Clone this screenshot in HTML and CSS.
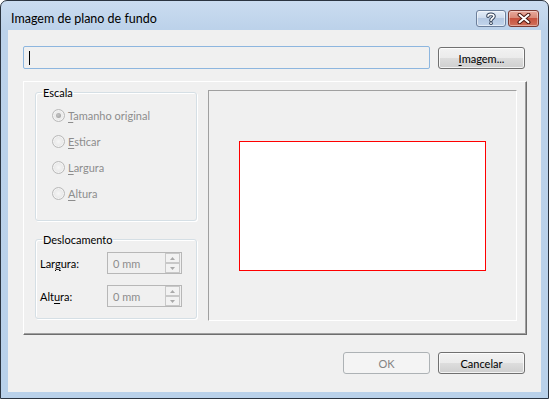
FILE: index.html
```html
<!DOCTYPE html>
<html lang="pt">
<head>
<meta charset="utf-8">
<title>Imagem de plano de fundo</title>
<link rel="stylesheet" href="styles.css">
</head>
<body>
<div class="window">
  <div class="titlebar">
    <span class="title">Imagem de plano de fundo</span>
    <div class="caption-btns">
      <div class="cap help">
        <svg width="12" height="13" viewBox="0 0 12 13">
          <path d="M3 4.2 C3 1.8 9 1.6 9 4.3 C9 6.2 6 6.3 6 8.4" fill="none" stroke="#34435a" stroke-width="3.6" stroke-linecap="round"/>
          <circle cx="6" cy="11.2" r="1.8" fill="#34435a"/>
          <path d="M3 4.2 C3 1.8 9 1.6 9 4.3 C9 6.2 6 6.3 6 8.4" fill="none" stroke="#fff" stroke-width="1.6" stroke-linecap="round"/>
          <circle cx="6" cy="11.2" r="0.9" fill="#fff"/>
        </svg>
      </div>
      <div class="cap close">
        <svg width="14" height="11" viewBox="0 0 14 11">
          <path d="M2.5 1.8 L11.5 9.2 M11.5 1.8 L2.5 9.2" stroke="#4a1710" stroke-width="4" stroke-linecap="round"/>
          <path d="M2.5 1.8 L11.5 9.2 M11.5 1.8 L2.5 9.2" stroke="#fff" stroke-width="2" stroke-linecap="round"/>
        </svg>
      </div>
    </div>
  </div>

  <div class="client">
    <div class="file-row">
      <div class="textbox"><span class="caret"></span></div>
      <div class="btn file-btn"><u>I</u>magem...</div>
    </div>

    <div class="panel">
      <div class="options">
        <fieldset class="group scale">
          <legend>Escala</legend>
          <div class="radio-row"><span class="radio checked"></span><span class="rlabel"><u>T</u>amanho original</span></div>
          <div class="radio-row"><span class="radio"></span><span class="rlabel"><u>E</u>sticar</span></div>
          <div class="radio-row"><span class="radio"></span><span class="rlabel"><u>L</u>argura</span></div>
          <div class="radio-row"><span class="radio"></span><span class="rlabel"><u>A</u>ltura</span></div>
        </fieldset>

        <fieldset class="group offset">
          <legend>Deslocamento</legend>
          <div class="spin-row">
            <span class="slabel">Lar<u>g</u>ura:</span>
            <div class="spinbox">
              <span class="svalue">0 mm</span>
              <div class="spin-btns">
                <span class="spin-btn"><svg width="5" height="3" viewBox="0 0 5 3"><path d="M0 3 L2.5 0 L5 3 Z" fill="#a9a9a9"/></svg></span>
                <span class="spin-btn"><svg width="5" height="3" viewBox="0 0 5 3"><path d="M0 0 L2.5 3 L5 0 Z" fill="#a9a9a9"/></svg></span>
              </div>
            </div>
          </div>
          <div class="spin-row">
            <span class="slabel">Alt<u>u</u>ra:</span>
            <div class="spinbox">
              <span class="svalue">0 mm</span>
              <div class="spin-btns">
                <span class="spin-btn"><svg width="5" height="3" viewBox="0 0 5 3"><path d="M0 3 L2.5 0 L5 3 Z" fill="#a9a9a9"/></svg></span>
                <span class="spin-btn"><svg width="5" height="3" viewBox="0 0 5 3"><path d="M0 0 L2.5 3 L5 0 Z" fill="#a9a9a9"/></svg></span>
              </div>
            </div>
          </div>
        </fieldset>
      </div>

      <div class="preview">
        <div class="page"></div>
      </div>
    </div>

    <div class="dialog-buttons">
      <div class="btn disabled">OK</div>
      <div class="btn">Cancelar</div>
    </div>
  </div>
</div>
</body>
</html>
```

FILE: styles.css
```css
* { box-sizing: border-box; }

html, body {
  margin: 0;
  padding: 0;
  background: #ffffff;
}

body {
  font-family: "Segoe UI", Lato, "Noto Sans", sans-serif;
  font-size: 12px;
  line-height: 15px;
  color: #000;
}

u { text-decoration-thickness: 1px; text-underline-offset: 2px; }

.window {
  width: 549px;
  height: 399px;
  border: 1px solid #2b3440;
  border-radius: 7px 7px 0 0;
  background: linear-gradient(to bottom, #cadcf0 0px, #bcd2ea 28px, #b9d1ea 100%);
  display: flex;
  flex-direction: column;
  padding: 0 7px 6px 7px;
  overflow: hidden;
}

.titlebar {
  height: 29px;
  margin: 0 -7px;
  padding: 0 9px 0 10px;
  display: flex;
  align-items: flex-start;
  justify-content: space-between;
}

.title {
  margin-top: 10px;
  font-size: 12.5px;
  line-height: 15px;
  color: #000;
}

.caption-btns {
  display: flex;
  gap: 2px;
  margin-top: 9px;
}

.cap {
  height: 17px;
  border-radius: 3px;
  display: flex;
  align-items: center;
  justify-content: center;
}

.cap.help {
  width: 30px;
  border: 1px solid #6c7f9b;
  background: linear-gradient(to bottom, #e4edf8 0%, #cfdcee 45%, #b5c9e3 50%, #c2d5ec 100%);
  box-shadow: inset 0 0 0 1px rgba(255,255,255,0.55);
}

.cap.close {
  width: 31px;
  border: 1px solid #7a3a33;
  background: linear-gradient(to bottom, #e9a99c 0%, #d98a78 45%, #c7523e 50%, #d0705a 100%);
  box-shadow: inset 0 0 0 1px rgba(255,255,255,0.4);
}

.client {
  flex: 1;
  background: #f0f0f0;
  padding: 16px 14px 0 15px;
  display: flex;
  flex-direction: column;
  font-size: 11px;
}

.file-row {
  display: flex;
  gap: 8px;
  height: 23px;
}

.textbox {
  flex: 1;
  height: 23px;
  border: 1px solid #8db6df;
  border-radius: 2px;
  background: #f0f0f0;
  padding: 4px 0 0 5px;
}

.caret {
  display: block;
  width: 1px;
  height: 14px;
  background: #000;
}

.btn {
  width: 87px;
  height: 22px;
  border: 1px solid #707070;
  border-radius: 3px;
  background: linear-gradient(to bottom, #f2f2f2 0%, #ebebeb 50%, #dddddd 51%, #cfcfcf 100%);
  box-shadow: inset 0 0 0 1px rgba(255,255,255,0.75);
  display: flex;
  align-items: center;
  justify-content: center;
  color: #000;
}

.btn.disabled {
  border-color: #adb2b5;
  background: #f4f4f4;
  box-shadow: none;
  color: #838383;
}

.file-btn {
  margin-top: 1px;
  margin-right: 2px;
}

.panel {
  margin-top: 12px;
  height: 254px;
  display: flex;
  border-top: 1px solid #ffffff;
  border-left: 1px solid #ffffff;
  border-right: 1px solid #6e6e6e;
  border-bottom: 1px solid #6e6e6e;
  box-shadow: inset -1px -1px 0 #a0a0a0;
  padding: 3px 9px 13px 11px;
}

.options {
  width: 162px;
  display: flex;
  flex-direction: column;
}

.group {
  margin: 0;
  border: 1px solid #d5dfe5;
  border-radius: 3px;
  box-shadow: inset 1px 1px 0 #ffffff, 1px 1px 0 #ffffff;
  min-width: 0;
}

.group legend {
  padding: 0 1px;
  line-height: 15px;
  color: #000;
}

.scale {
  height: 136px;
  padding: 2px 0 0 16px;
}

.scale legend { margin-left: -10px; }

.offset {
  height: 87px;
  margin-top: 11px;
  padding: 5px 0 0 4px;
}

.offset legend { margin-left: 2px; }

.radio-row {
  height: 26px;
  display: flex;
  align-items: center;
  gap: 3px;
  color: #8d8d8d;
}

.radio {
  width: 13px;
  height: 13px;
  border-radius: 50%;
  border: 1px solid #b9b9b9;
  background: radial-gradient(circle at 50% 50%, #f6f6f6 0%, #e8e8e8 60%, #dcdcdc 100%);
  box-shadow: inset 0 0 0 1px #f4f4f4;
  display: flex;
  align-items: center;
  justify-content: center;
  flex: none;
}

.radio.checked::after {
  content: "";
  width: 5px;
  height: 5px;
  border-radius: 50%;
  background: radial-gradient(circle at 40% 40%, #c4c4c4 0%, #9a9a9a 100%);
}

.spin-row {
  display: flex;
  align-items: center;
  height: 22px;
  margin-bottom: 11px;
}

.slabel {
  width: 67px;
  color: #000;
}

.spinbox {
  width: 75px;
  height: 22px;
  border: 1px solid #b7b7b7;
  background: #f0f0f0;
  display: flex;
  align-items: center;
  justify-content: space-between;
  padding: 0 1px 0 5px;
}

.svalue {
  color: #8d8d8d;
}

.spin-btns {
  display: flex;
  flex-direction: column;
  gap: 0;
}

.spin-btn {
  width: 15px;
  height: 10px;
  border: 1px solid #c8c8c8;
  background: #f2f2f2;
  display: flex;
  align-items: center;
  justify-content: center;
}

.preview {
  flex: 1;
  margin-left: 11px;
  margin-top: 5px;
  border-top: 1px solid #a0a0a0;
  border-left: 1px solid #a0a0a0;
  border-right: 1px solid #ffffff;
  border-bottom: 1px solid #ffffff;
  display: flex;
  align-items: center;
  justify-content: center;
}

.page {
  width: 247px;
  height: 130px;
  border: 1px solid #ff0000;
  background: #ffffff;
}

.dialog-buttons {
  margin-top: 17px;
  margin-right: 2px;
  display: flex;
  justify-content: flex-end;
  gap: 8px;
}
```
